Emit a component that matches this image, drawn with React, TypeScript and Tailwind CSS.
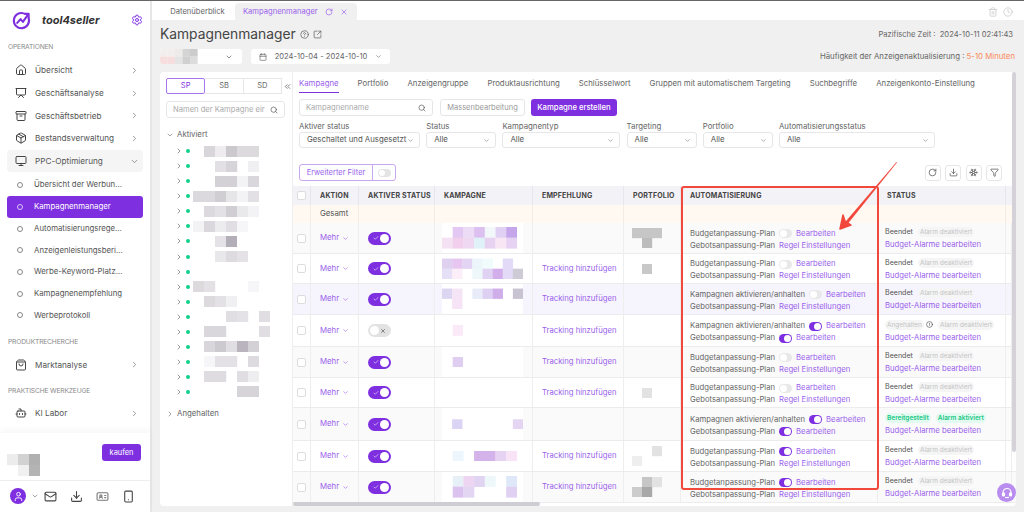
import {
  Bot, ChevronDown, ChevronRight, ChevronsLeft, Calendar, CircleAlert, CircleHelp, Clock, Download, Filter,
  House, IdCard, Mail, Monitor, Package, Presentation, RotateCw, Search, Settings, ShoppingBag, Smartphone,
  Snowflake, SquareArrowOutUpRight, Trash2, User, Archive, Check, X,
} from "lucide-react";
import type { ReactNode } from "react";

const PURPLE = "#7e30e1";

type Block = [number, number, string];

// pixelated (censored) blocks, coordinates in block units
function Mosaic({ blocks, size = 11, className = "" }: { blocks: Block[]; size?: number; className?: string }) {
  const w = Math.max(...blocks.map((b) => b[0])) + 1;
  const h = Math.max(...blocks.map((b) => b[1])) + 1;
  return (
    <svg width={w * size} height={h * size} viewBox={`0 0 ${w} ${h}`} className={className}>
      {blocks.map(([x, y, c], i) => (
        <rect key={i} x={x} y={y} width="1.02" height="1.02" fill={c} />
      ))}
    </svg>
  );
}

function Toggle({ on, small }: { on: boolean; small?: boolean }) {
  if (small) {
    return (
      <span className={`inline-flex h-[9px] w-[13px] shrink-0 items-center rounded-full p-px ${on ? "justify-end bg-[#7e30e1]" : "justify-start bg-[#e8e8e8]"}`}>
        <span className="h-[7px] w-[7px] rounded-full bg-white" />
      </span>
    );
  }
  return on ? (
    <span className="inline-flex h-[13px] w-[23px] items-center justify-between rounded-full bg-[#7e30e1] pl-[5px] pr-[2px]">
      <Check size={6} color="#d9c4f7" strokeWidth={3} />
      <span className="h-[9px] w-[9px] rounded-full bg-white" />
    </span>
  ) : (
    <span className="inline-flex h-[13px] w-[23px] items-center justify-between rounded-full bg-[#e2e2e2] pl-[2px] pr-[5px]">
      <span className="h-[9px] w-[9px] rounded-full bg-white" />
      <X size={6} color="#666" strokeWidth={3} />
    </span>
  );
}

function NavItem({ icon, label, open, active }: { icon: ReactNode; label: string; open?: boolean; active?: boolean }) {
  return (
    <div className={`mx-[7px] flex h-[22.7px] items-center rounded-[4px] pl-[4px] pr-[4px] ${active ? "bg-[#f5f5f5]" : ""}`}>
      <span className="flex w-[20px] shrink-0 justify-center text-[#444]">{icon}</span>
      <span className="ml-[4px] flex-1 whitespace-nowrap text-[8.2px] text-[#555]">{label}</span>
      {open ? <ChevronDown size={9} color="#777" className="shrink-0" /> : <ChevronRight size={9} color="#777" className="shrink-0" />}
    </div>
  );
}

function SubItem({ label, active }: { label: string; active?: boolean }) {
  return (
    <div className={`mx-[7px] flex h-[21.7px] items-center rounded-[3px] pl-[10px] ${active ? "bg-[#7e30e1] text-white" : "text-[#555]"}`}>
      <span className={`h-[6px] w-[6px] rounded-full border ${active ? "border-[#d9c4f7]" : "border-[#888]"}`} />
      <span className="ml-[11px] whitespace-nowrap text-[7.8px]">{label}</span>
    </div>
  );
}

function SectionTitle({ children, className = "" }: { children: ReactNode; className?: string }) {
  return <div className={`pl-[8px] text-[6.7px] uppercase tracking-tight text-[#8a8a8a] ${className}`}>{children}</div>;
}

function Sidebar() {
  return (
    <aside className="flex h-full w-[152px] shrink-0 flex-col border-r-2 border-[#e6e6e6] bg-white">
      <div className="flex-1 overflow-hidden">
        <div className="flex h-[38px] items-center pl-[12px] pr-[7px]">
          <svg width="19" height="19" viewBox="0 0 20 20" fill="none" stroke={PURPLE} strokeWidth="2.2" strokeLinecap="round" strokeLinejoin="round">
            <path d="M17.5 7.5a8 8 0 1 1-5-5" />
            <path d="M5.5 12.5 9 8.5l2.5 3L17 3.5" />
            <path d="M13.5 3h4v4" />
          </svg>
          <span className="ml-[11px] flex-1 text-[11px] font-bold italic text-[#333]">tool4seller</span>
          <Settings size={12} color={PURPLE} />
        </div>
        <SectionTitle className="mt-[3px]">Operationen</SectionTitle>
        <div className="mt-[7px]">
          <NavItem icon={<House size={12} />} label="Übersicht" />
          <NavItem icon={<Presentation size={12} />} label="Geschäftsanalyse" />
          <NavItem icon={<Archive size={12} />} label="Geschäftsbetrieb" />
          <NavItem icon={<Package size={12} />} label="Bestandsverwaltung" />
          <NavItem icon={<Monitor size={12} />} label="PPC-Optimierung" open active />
        </div>
        <div className="mt-[2px]">
          <SubItem label="Übersicht der Werbun..." />
          <SubItem label="Kampagnenmanager" active />
          <SubItem label="Automatisierungsrege..." />
          <SubItem label="Anzeigenleistungsberi..." />
          <SubItem label="Werbe-Keyword-Platz..." />
          <SubItem label="Kampagnenempfehlung" />
          <SubItem label="Werbeprotokoll" />
        </div>
        <SectionTitle className="mt-[11px]">Produktrecherche</SectionTitle>
        <div className="mt-[6px]">
          <NavItem icon={<ShoppingBag size={12} />} label="Marktanalyse" />
        </div>
        <SectionTitle className="mt-[10px]">Praktische Werkzeuge</SectionTitle>
        <div className="mt-[6px]">
          <NavItem icon={<Bot size={12} />} label="KI Labor" />
        </div>
      </div>
      <div className="h-[79px] shrink-0 bg-white shadow-[0_-4px_6px_rgba(0,0,0,0.03)]">
        <div className="flex h-[48px] items-start justify-between border-b border-[#eee] pl-[7px] pr-[9px] pt-[11px]">
          <Mosaic
            className="mt-[10px]"
            blocks={[[0, 0, "#ececec"], [1, 0, "#d2d2d2"], [2, 0, "#b0b0b0"], [1, 1, "#f0f0f0"], [2, 1, "#b4b4b4"]]}
          />
          <span className="flex h-[17px] w-[39px] items-center justify-center rounded-[3px] bg-[#7e30e1] text-[7.4px] text-white">kaufen</span>
        </div>
        <div className="flex items-center pl-[10px] pt-[7px] text-[#444]">
          <span className="flex h-[16px] w-[16px] items-center justify-center rounded-full bg-[#7e30e1]">
            <User size={11} color="white" />
          </span>
          <ChevronDown size={8} className="ml-[5px]" color="#777" />
          <Mail size={13} className="ml-[4.5px]" />
          <Download size={13} className="ml-[13px]" />
          <IdCard size={13} className="ml-[13px]" color="#777" />
          <Smartphone size={13} className="ml-[13px]" />
        </div>
      </div>
    </aside>
  );
}

const TREE: { blocks: Block[] }[] = [
  { blocks: [[1, 0, "#d8d6da"], [2, 0, "#eeecef"], [3, 0, "#cbc8ce"], [4, 0, "#dcdadd"], [5, 0, "#dcdadd"]] },
  { blocks: [[2, 0, "#e2e0e4"], [3, 0, "#d6d4d8"], [5, 0, "#f0eff1"]] },
  { blocks: [[2, 0, "#d3d0d6"], [3, 0, "#d3d0d6"], [4, 0, "#f3f2f4"], [5, 0, "#d9d7db"]] },
  { blocks: [[0, 0, "#dbd9dd"], [1, 0, "#dbd9dd"], [2, 0, "#d0cdd3"], [3, 0, "#e6e5e8"], [4, 0, "#f3f2f4"], [5, 0, "#e2e0e4"]] },
  { blocks: [[1, 0, "#dbd9dd"], [2, 0, "#e3e1e5"], [3, 0, "#d0cdd3"], [4, 0, "#e9e8eb"], [5, 0, "#f3f2f4"]] },
  { blocks: [[0, 0, "#f3f2f4"], [1, 0, "#dad8dc"], [2, 0, "#ecebee"], [3, 0, "#e0dee2"], [4, 0, "#f6f5f7"]] },
  { blocks: [[2, 0, "#e4e2e6"], [3, 0, "#b4aeb9"]] },
  { blocks: [[2, 0, "#e8e7ea"], [3, 0, "#dddbdf"], [4, 0, "#e4e2e6"]] },
  { blocks: [] },
  { blocks: [[0, 0, "#dcdadd"], [1, 0, "#e3e1e5"], [5, 0, "#f6f5f7"]] },
  { blocks: [[1, 0, "#dcdadd"], [2, 0, "#e3e1e5"], [3, 0, "#f0eff1"]] },
  { blocks: [[3, 0, "#e0dee2"], [4, 0, "#e4e2e6"], [6, 0, "#e0dee2"]] },
  { blocks: [[1, 0, "#d9d7db"], [2, 0, "#d9d7db"], [6, 0, "#e0dee2"]] },
  { blocks: [[1, 0, "#d8d6da"], [2, 0, "#ccc9cf"], [3, 0, "#e0dee2"], [4, 0, "#b9b4bd"], [5, 0, "#d3d0d6"]] },
  { blocks: [[1, 0, "#f6f5f7"], [2, 0, "#e3e1e5"], [3, 0, "#e3e1e5"], [5, 0, "#dddbdf"]] },
  { blocks: [[1, 0, "#dedce0"], [2, 0, "#dedce0"], [4, 0, "#e0dee2"], [5, 0, "#eeedf0"]] },
  { blocks: [[4, 0, "#d6d4d8"], [5, 0, "#d6d4d8"]] },
];

function CampaignTree() {
  return (
    <div className="flex w-[132px] shrink-0 flex-col rounded-l-[4px] bg-white px-[6px] pt-[6px]">
      <div className="relative flex w-[116px]">
        <span className="flex h-[16px] flex-1 items-center justify-center rounded-[2px] border border-[#a877ee] text-[7.5px] text-[#7e30e1]">SP</span>
        <span className="flex h-[16px] flex-1 items-center justify-center border-y border-r border-[#e6e6e6] text-[7.5px] text-[#666]">SB</span>
        <span className="flex h-[16px] flex-1 items-center justify-center border-y border-r border-[#e6e6e6] text-[7.5px] text-[#666]">SD</span>
        <span className="absolute left-[116px] top-[-6px] flex h-[28px] w-[10px] items-center justify-center bg-white">
          <ChevronsLeft size={9} color="#555" />
        </span>
      </div>
      <div className="mt-[7px] flex h-[17px] w-[119px] items-center justify-between rounded-[3px] border border-[#e6e6e6] px-[6px]">
        <span className="overflow-hidden whitespace-nowrap text-[7.6px] text-[#aaa]">Namen der Kampagne eir</span>
        <Search size={8} color="#555" className="shrink-0" />
      </div>
      <div className="mt-[11px] flex items-center text-[7.8px] text-[#666]">
        <ChevronDown size={8} color="#777" />
        <span className="ml-[3px]">Aktiviert</span>
      </div>
      <div className="mt-[3px]">
        {TREE.map((row, i) => (
          <div key={i} className="flex h-[15.05px] items-center pl-[9px]">
            <ChevronRight size={8} color="#666" />
            <span className="ml-[3px] h-[4px] w-[4px] rounded-full bg-[#10d08a]" />
            {row.blocks.length > 0 && <Mosaic className="ml-[3px]" size={11} blocks={row.blocks} />}
          </div>
        ))}
      </div>
      <div className="mt-[9px] flex items-center text-[7.8px] text-[#666]">
        <ChevronRight size={8} color="#777" />
        <span className="ml-[3px]">Angehalten</span>
      </div>
    </div>
  );
}

function Select({ label, value, width }: { label: string; value: string; width: string }) {
  return (
    <div className={width}>
      <div className="text-[7.8px] leading-[12px] text-[#666]">{label}</div>
      <div className="flex h-[16px] items-center justify-between rounded-[3px] border border-[#e6e6e6] pl-[7px] pr-[5px] text-[7.8px] text-[#555]">
        <span className="whitespace-nowrap">{value}</span>
        <ChevronDown size={7} color="#777" />
      </div>
    </div>
  );
}

const NAV_TABS = [
  "Kampagne", "Portfolio", "Anzeigengruppe", "Produktausrichtung", "Schlüsselwort",
  "Gruppen mit automatischem Targeting", "Suchbegriffe", "Anzeigenkonto-Einstellung",
];

const GRID = "grid grid-cols-[18px_48px_76px_98px_91px_57px_197px_128px_6px]";

type Row = {
  h: string;
  bg: string;
  on: boolean;
  tracking: boolean;
  first: "Budgetanpassung-Plan" | "Kampagnen aktivieren/anhalten";
  firstOn: boolean;
  secondOn?: boolean;
  status: "end" | "paused" | "ready";
  camp: Block[];
  port?: Block[];
};

const ROWS: Row[] = [
  { h: "h-[31px]", bg: "bg-[#fafafa]", on: true, tracking: false, first: "Budgetanpassung-Plan", firstOn: false, status: "end",
    camp: [[1, 0, "#e2c8f2"], [2, 0, "#ecdcf6"], [3, 0, "#dcc0ef"], [4, 0, "#f2f8fa"], [5, 0, "#e0d0f4"], [6, 0, "#c6a6ea"], [0, 1, "#f4e2f4"], [1, 1, "#f2cfec"], [2, 1, "#eed8f2"], [3, 1, "#dff2f8"], [4, 1, "#e8d2f2"], [5, 1, "#f8e6f4"], [6, 1, "#e6d2f2"]],
    port: [[0, 0, "#c6c6c6"], [1, 0, "#c6c6c6"], [2, 0, "#c6c6c6"], [1, 1, "#bcbcbc"]] },
  { h: "h-[30px]", bg: "bg-white", on: true, tracking: true, first: "Budgetanpassung-Plan", firstOn: false, status: "end",
    camp: [[0, 0, "#e0d0f0"], [1, 0, "#e6c6f0"], [2, 0, "#e2d4f2"], [3, 0, "#ecf6fa"], [4, 0, "#f0fbfc"], [6, 0, "#e2daf6"], [0, 1, "#e6e0f6"], [1, 1, "#fbeef8"], [3, 1, "#eef8fa"], [4, 1, "#e0d2f2"], [5, 1, "#d2aeea"], [6, 1, "#e2daf6"], [7, 1, "#cfcbd6"]],
    port: [[1, 0, "#c8c8c8"]] },
  { h: "h-[31px]", bg: "bg-[#f6f4fc]", on: true, tracking: true, first: "Kampagnen aktivieren/anhalten", firstOn: false, status: "end",
    camp: [[0, 0, "#ddd6f2"], [1, 0, "#f4e4f6"], [3, 0, "#e8ecf8"], [4, 0, "#ddd0f2"], [5, 0, "#cfaeea"], [7, 0, "#c8c2d2"], [1, 1, "#f6e4f6"]] },
  { h: "h-[32px]", bg: "bg-white", on: false, tracking: true, first: "Kampagnen aktivieren/anhalten", firstOn: true, secondOn: true, status: "paused",
    camp: [[1, 0, "#faeaf8"]] },
  { h: "h-[31px]", bg: "bg-[#fafafa]", on: true, tracking: true, first: "Budgetanpassung-Plan", firstOn: false, status: "end",
    camp: [[1, 0, "#e0cdf2"]] },
  { h: "h-[30px]", bg: "bg-white", on: true, tracking: true, first: "Budgetanpassung-Plan", firstOn: false, status: "end",
    camp: [], port: [[1, 0, "#e2e2e2"]] },
  { h: "h-[33px]", bg: "bg-[#fafafa]", on: true, tracking: false, first: "Kampagnen aktivieren/anhalten", firstOn: true, secondOn: true, status: "ready",
    camp: [[1, 0, "#dcd4f4"], [7, 0, "#e4d6f2"]] },
  { h: "h-[31px]", bg: "bg-white", on: true, tracking: true, first: "Budgetanpassung-Plan", firstOn: true, status: "end",
    camp: [[1, 0, "#ecf6fc"], [3, 0, "#d4b2ea"], [4, 0, "#d4b2ea"], [5, 0, "#e6d2f2"], [6, 0, "#f8e4f6"]],
    port: [[2, 0, "#e2e2e2"], [0, 1, "#eeeeee"]] },
  { h: "h-[31px]", bg: "bg-[#fafafa]", on: true, tracking: true, first: "Budgetanpassung-Plan", firstOn: true, status: "end",
    camp: [[1, 0, "#e6f0f6"], [2, 0, "#eed6f2"], [3, 0, "#e0d4f2"], [4, 0, "#eef8fa"], [6, 0, "#dfe8f8"], [1, 1, "#dcc2ee"], [2, 1, "#e2d6f2"], [6, 1, "#e0d0f2"]],
    port: [[1, 0, "#c6c6c6"], [2, 0, "#e2e2e2"], [0, 1, "#cccccc"], [1, 1, "#a8a8a8"]] },
];

const LINK = "whitespace-nowrap text-[7.7px] text-[#9a5fec]";
const MUTED = "whitespace-nowrap text-[7.7px] text-[#666]";

function Cell({ children, className = "" }: { children?: ReactNode; className?: string }) {
  return <div className={`flex items-center border-r border-[#eeeeee] ${className}`}>{children}</div>;
}

function StatusCell({ status }: { status: Row["status"] }) {
  return (
    <Cell className="flex-col !items-start justify-center pl-[7px] pt-[2px]">
      <div className="flex items-center gap-[5px] whitespace-nowrap text-[6.5px] leading-[10px]">
        {status === "end" && (
          <>
            <span className="text-[7.1px] text-[#555]">Beendet</span>
            <span className="rounded-full bg-[#f5f5f5] px-[2px] text-[#c4c4c4]">Alarm deaktiviert</span>
          </>
        )}
        {status === "paused" && (
          <>
            <span className="rounded-full bg-[#f5f5f5] px-[2px] text-[#c4c4c4]">Angehalten</span>
            <CircleAlert size={7} color="#444" className="-ml-[3px]" />
            <span className="rounded-full bg-[#f5f5f5] px-[2px] text-[#c4c4c4]">Alarm deaktiviert</span>
          </>
        )}
        {status === "ready" && (
          <>
            <span className="rounded-full bg-[#e2faf0] px-[2px] font-semibold text-[#19c886]">Bereitgestellt</span>
            <span className="rounded-full bg-[#e2faf0] px-[2px] font-semibold text-[#19c886]">Alarm aktiviert</span>
          </>
        )}
      </div>
      <span className={`${LINK} mt-[2px] leading-[12px]`}>Budget-Alarme bearbeiten</span>
    </Cell>
  );
}

function TableRow({ row }: { row: Row }) {
  return (
    <div className={`${GRID} ${row.h} ${row.bg} border-b border-[#ececec]`}>
      <Cell className="justify-center">
        <span className="h-[9px] w-[9px] rounded-[2px] border border-[#ddd] bg-white" />
      </Cell>
      <Cell className="pl-[9px]">
        <span className="text-[7.8px] text-[#9a5fec]">Mehr</span>
        <ChevronDown size={7} color="#9a5fec" className="ml-[3px]" />
      </Cell>
      <Cell className="pl-[9px]">
        <Toggle on={row.on} />
      </Cell>
      <Cell className="pl-[7px]">
        <div className="flex h-full w-[81px] items-center bg-white">
          {row.camp.length > 0 && <Mosaic size={10.7} blocks={row.camp} />}
        </div>
      </Cell>
      <Cell className="pl-[9px]">
        {row.tracking && <span className={LINK}>Tracking hinzufügen</span>}
      </Cell>
      <Cell className="justify-start pl-[8px]">
        {row.port && <Mosaic size={10} blocks={row.port} />}
      </Cell>
      <Cell className="flex-col !items-start justify-center pl-[9px] pt-[3px]">
        <div className="flex h-[12px] items-center gap-[4px]">
          <span className={MUTED}>{row.first}</span>
          <Toggle small on={row.firstOn} />
          <span className={LINK}>Bearbeiten</span>
        </div>
        <div className="flex h-[12px] items-center gap-[4px]">
          <span className={MUTED}>Gebotsanpassung-Plan</span>
          {row.secondOn ? (
            <>
              <Toggle small on />
              <span className={LINK}>Bearbeiten</span>
            </>
          ) : (
            <span className={LINK}>Regel Einstellungen</span>
          )}
        </div>
      </Cell>
      <StatusCell status={row.status} />
      <Cell />
    </div>
  );
}

function CampaignTable() {
  const th = "flex items-center border-r border-[#e6e6ee] pl-[9px] pt-[1px] text-[7px] font-bold tracking-wide text-[#444]";
  return (
    <div className="flex-1 overflow-hidden">
      <div className={`${GRID} h-[19px] bg-[#f3f2f7]`}>
        <div className="flex items-center justify-center border-r border-[#e6e6ee]">
          <span className="h-[9px] w-[9px] rounded-[2px] border border-[#ddd] bg-white" />
        </div>
        <div className={th}>AKTION</div>
        <div className={th}>AKTIVER STATUS</div>
        <div className={th}>KAMPAGNE</div>
        <div className={th}>EMPFEHLUNG</div>
        <div className={th}>PORTFOLIO</div>
        <div className={th}>AUTOMATISIERUNG</div>
        <div className={th}>STATUS</div>
        <div />
      </div>
      <div className={`${GRID} h-[18px] bg-[#fff9f1] text-[7.8px] text-[#555]`}>
        <Cell className="border-[#f4ece0]" />
        <Cell className="border-[#f4ece0] pl-[9px]">Gesamt</Cell>
        <Cell className="border-[#f4ece0]" />
        <Cell className="border-[#f4ece0]" />
        <Cell className="border-[#f4ece0]" />
        <Cell className="border-[#f4ece0]" />
        <Cell className="border-[#f4ece0]" />
        <Cell className="border-[#f4ece0]" />
      </div>
      {ROWS.map((row, i) => (
        <TableRow key={i} row={row} />
      ))}
    </div>
  );
}

function CampaignPanel() {
  return (
    <div className="relative flex min-w-0 flex-1 flex-col rounded-r-[4px] border-l border-[#eee] bg-white">
      <div className="flex h-[21px] items-end gap-[19px] pl-[6px] text-[7.8px] text-[#666]">
        {NAV_TABS.map((t, i) => (
          <span key={t} className={`h-[21px] whitespace-nowrap pt-[6px] ${i === 0 ? "border-b border-[#7e30e1] text-[#9a5fec]" : ""}`}>{t}</span>
        ))}
      </div>
      <div className="mt-[6px] flex h-[17px] items-center pl-[6px]">
        <div className="flex h-[17px] w-[134px] items-center justify-between rounded-[3px] border border-[#e6e6e6] px-[6px] text-[7.6px] text-[#aaa]">
          Kampagnenname
          <Search size={8} color="#555" />
        </div>
        <span className="ml-[7px] flex h-[17px] w-[85px] items-center justify-center rounded-[3px] border border-[#e6e6e6] text-[7.5px] text-[#999]">Massenbearbeitung</span>
        <span className="ml-[6px] flex h-[17px] w-[86px] items-center justify-center rounded-[3px] bg-[#7e30e1] text-[7.7px] font-medium text-white">Kampagne erstellen</span>
      </div>
      <div className="mt-[4px] flex gap-[6.2px] pl-[6px]">
        <Select label="Aktiver status" value="Geschaltet und Ausgesetzt" width="w-[121px]" />
        <Select label="Status" value="Alle" width="w-[70px]" />
        <Select label="Kampagnentyp" value="Alle" width="w-[118px]" />
        <Select label="Targeting" value="Alle" width="w-[70px]" />
        <Select label="Portfolio" value="Alle" width="w-[70px]" />
        <Select label="Automatisierungsstatus" value="Alle" width="w-[156px]" />
      </div>
      <div className="mt-[16px] flex h-[17px] items-center justify-between pl-[6px] pr-[14px]">
        <div className="flex h-[17px] items-center rounded-[3px] border border-[#c9a8f2]">
          <span className="flex h-full w-[73px] items-center justify-center border-r border-[#c9a8f2] text-[7.5px] text-[#9a5fec]">Erweiterter Filter</span>
          <span className="flex w-[22px] justify-center">
            <span className="flex h-[8px] w-[13px] items-center rounded-full bg-[#e4e4e4] p-px">
              <span className="h-[6px] w-[6px] rounded-full bg-white" />
            </span>
          </span>
        </div>
        <div className="flex gap-[4.5px]">
          {[RotateCw, Download, Snowflake, Filter].map((Icon, i) => (
            <span key={i} className="flex h-[16px] w-[16px] items-center justify-center rounded-[3px] border border-[#e6e6e6]">
              <Icon size={9} color="#555" />
            </span>
          ))}
        </div>
      </div>
      <div className="mt-[5px] flex min-h-0 flex-1 flex-col">
        <CampaignTable />
      </div>
      {/* horizontal + vertical scrollbars */}
      <div className="absolute bottom-0 left-0 h-[4px] w-[247px] rounded-full bg-[#cfcdd4]" />
      <div className="absolute right-0 top-0 h-[380px] w-[4px] rounded-full bg-[#d4d2d8]" />
    </div>
  );
}

export default function App() {
  return (
    <div className="relative flex h-[512px] w-[1024px] overflow-hidden border-t border-[#666] bg-[#f0f0f0] font-['Inter',sans-serif]">
      <Sidebar />
      <main className="flex min-w-0 flex-1 flex-col">
        <div className="flex h-[19px] shrink-0 items-end bg-white pl-[8px]">
          <span className="flex h-[16px] w-[75px] items-center justify-center text-[7.6px] text-[#666]">Datenüberblick</span>
          <span className="flex h-[17px] w-[122px] items-center gap-[7px] rounded-t-[4px] bg-[#f0f0f0] pl-[8px] text-[7.6px] text-[#9a5fec]">
            Kampagnenmanager
            <RotateCw size={8} />
            <X size={8} />
          </span>
          <span className="ml-auto flex h-[17px] items-center gap-[5px] pr-[11px]">
            <Trash2 size={10} color="#ccc" />
            <Clock size={10} color="#ccc" />
          </span>
        </div>
        <div className="flex h-[26px] shrink-0 items-center justify-between pl-[8px] pr-[11px] pt-[3px]">
          <div className="flex items-center">
            <h1 className="text-[13.8px] font-normal leading-none text-[#444]">Kampagnenmanager</h1>
            <CircleHelp size={9} color="#666" className="ml-[4px]" />
            <SquareArrowOutUpRight size={9} color="#666" className="ml-[4px]" />
          </div>
          <span className="text-[7.6px] text-[#666]">Pazifische Zeit :&nbsp; 2024-10-11 02:41:43</span>
        </div>
        <div className="flex h-[26px] shrink-0 items-start justify-between pl-[8px] pr-[9px] pt-[3px]">
          <div className="flex items-center">
            <div className="flex h-[15px] w-[82px] items-center justify-between overflow-hidden rounded-[3px] bg-white pr-[9px]">
              <Mosaic size={7.5} blocks={[[0, 0, "#f2eeee"], [1, 0, "#f2eeee"], [2, 0, "#eeeaea"], [3, 0, "#d4d4d4"], [4, 0, "#cccccc"], [0, 1, "#f6dede"], [1, 1, "#f6dede"], [2, 1, "#e4e4e4"], [3, 1, "#d0d0d0"], [4, 1, "#dcdcdc"]]} />
              <ChevronDown size={8} color="#555" />
            </div>
            <div className="ml-[9px] flex h-[15px] w-[139px] items-center justify-between rounded-[3px] bg-white pl-[8px] pr-[8px] text-[7.6px] text-[#666]">
              <Calendar size={8} />
              <span>2024-10-04 - 2024-10-10</span>
              <ChevronDown size={7} />
            </div>
          </div>
          <span className="mt-[2px] text-[7.8px] text-[#666]">
            Häufigkeit der Anzeigenaktualisierung : <span className="text-[#fb8a5c]">5-10 Minuten</span>
          </span>
        </div>
        <div className="mb-[6px] ml-[8px] mr-[8px] flex min-h-0 flex-1">
          <CampaignTree />
          <CampaignPanel />
        </div>
      </main>

      {/* highlight box + arrow that sit on top of the screenshot */}
      <div className="absolute left-[681px] top-[185px] h-[304px] w-[198px] rounded-[3px] border-2 border-[#f2483c]" />
      <svg className="absolute left-0 top-0" width="1024" height="512" fill="none">
        <path d="M896.5 161 L897 161.6 L846 225 L843.5 223 Z" fill="#f2483c" />
        <path d="M840 228 L843 214 L845 220 L851 224 Z" fill="#f2483c" stroke="#f2483c" strokeWidth="1.5" strokeLinejoin="round" />
      </svg>
      <span className="absolute left-[997px] top-[482px] flex h-[19px] w-[19px] items-center justify-center rounded-full bg-[#b98cf0]">
        <svg width="12" height="12" viewBox="0 0 12 12" fill="none" stroke="white" strokeWidth="1.2">
          <path d="M2 7V5.5a4 4 0 0 1 8 0V7" />
          <rect x="1.5" y="6" width="2" height="3" rx="0.8" fill="white" />
          <rect x="8.5" y="6" width="2" height="3" rx="0.8" fill="white" />
          <path d="M4 10.5h4" />
        </svg>
      </span>
    </div>
  );
}
